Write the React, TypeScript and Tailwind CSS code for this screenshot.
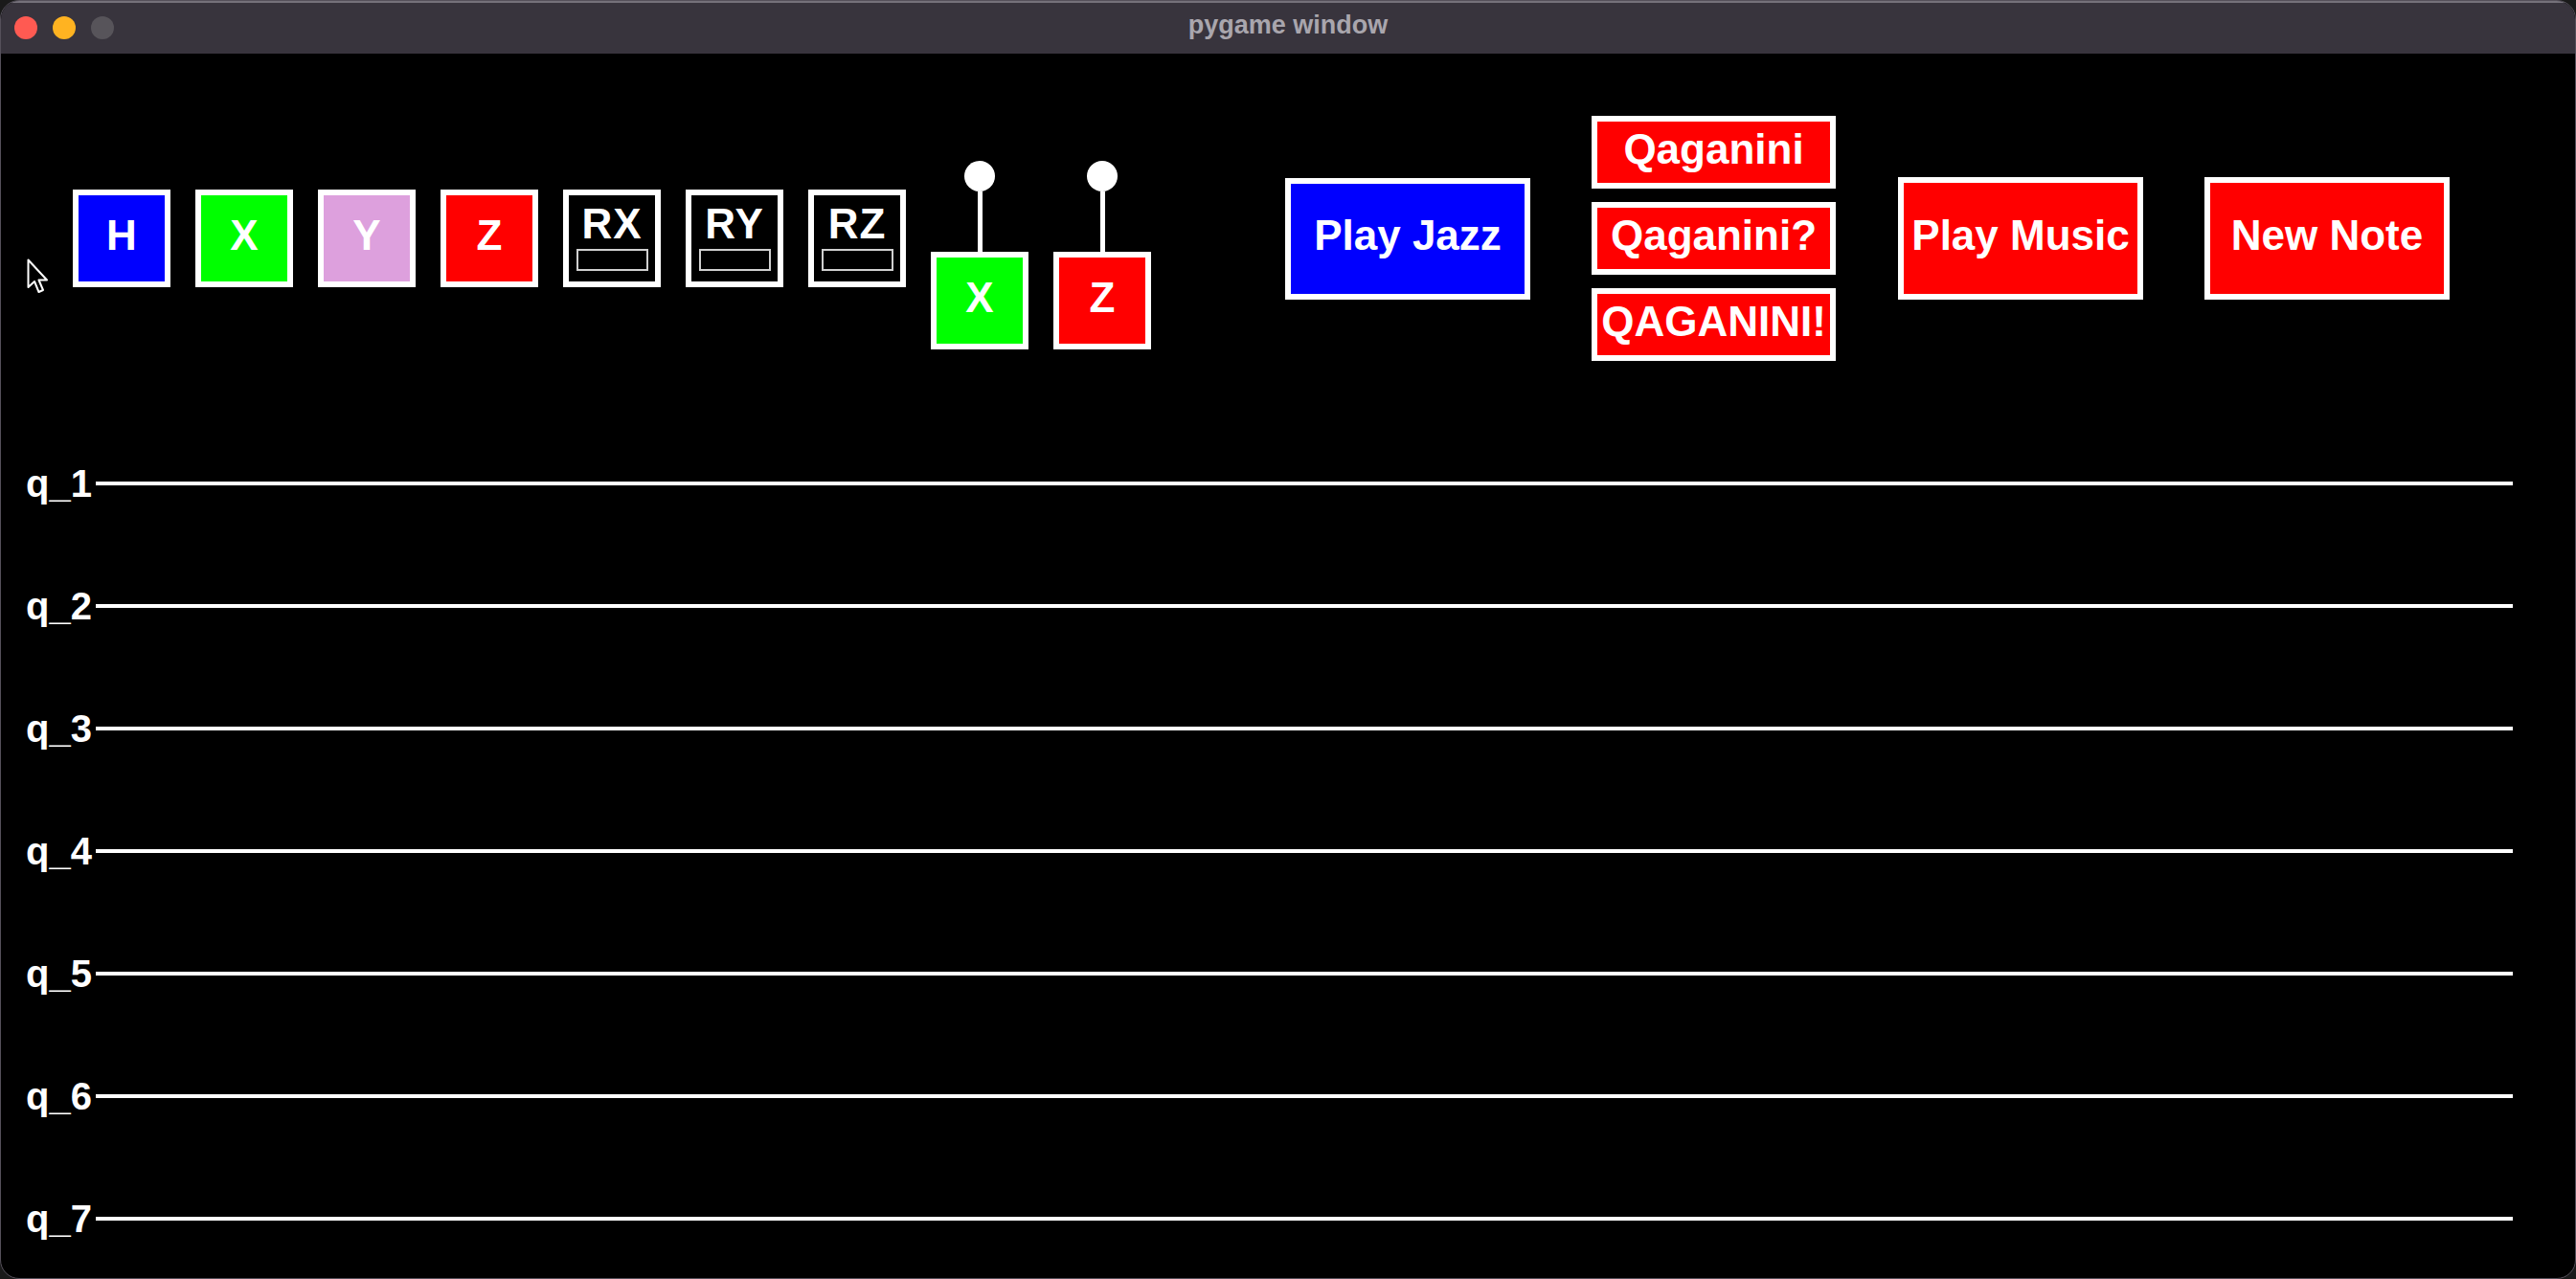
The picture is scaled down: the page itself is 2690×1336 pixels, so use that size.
import React from "react";

type Gate = {
  label: string;
  bg: string;
  angle?: boolean;
};

const gates: Gate[] = [
  { label: "H", bg: "bg-[#0000ff]" },
  { label: "X", bg: "bg-[#00ff00]" },
  { label: "Y", bg: "bg-[#dda0dd]" },
  { label: "Z", bg: "bg-[#ff0000]" },
  { label: "RX", bg: "bg-black", angle: true },
  { label: "RY", bg: "bg-black", angle: true },
  { label: "RZ", bg: "bg-black", angle: true },
];

const controlled: Gate[] = [
  { label: "X", bg: "bg-[#00ff00]" },
  { label: "Z", bg: "bg-[#ff0000]" },
];

const qubits = ["q_1", "q_2", "q_3", "q_4", "q_5", "q_6", "q_7"];

function GateBox({ gate }: { gate: Gate }) {
  if (gate.angle) {
    return (
      <div
        className={`w-[102px] h-[102px] border-[6px] border-white ${gate.bg} flex flex-col items-center pt-[8px]`}
      >
        <span className="text-[44px] leading-none font-bold text-white tracking-[1px]">
          {gate.label}
        </span>
        <div className="mt-[4px] w-[75px] h-[23px] border-2 border-[#d0d0d0]" />
      </div>
    );
  }
  return (
    <div
      className={`w-[102px] h-[102px] border-[6px] border-white ${gate.bg} flex items-center justify-center pb-[6px]`}
    >
      <span className="text-[44px] leading-none font-bold text-white">
        {gate.label}
      </span>
    </div>
  );
}

function ControlledGate({ gate }: { gate: Gate }) {
  return (
    <div className="flex flex-col items-center">
      <div className="w-[32px] h-[32px] rounded-full bg-white" />
      <div className="w-[5px] h-[63px] bg-white" />
      <GateBox gate={gate} />
    </div>
  );
}

function Button({
  label,
  bg,
  size,
}: {
  label: string;
  bg: string;
  size: string;
}) {
  return (
    <div
      className={`${size} ${bg} border-[6px] border-white flex items-center justify-center pb-[6px]`}
    >
      <span className="text-[44px] leading-none font-bold text-white whitespace-nowrap">
        {label}
      </span>
    </div>
  );
}

function Cursor() {
  return (
    <svg
      className="absolute left-[27px] top-[269px]"
      width="24"
      height="38"
      viewBox="0 0 24 38"
    >
      <path
        d="M1.5 1.5 L1.5 30 L8 24 L12.5 35 L17 33 L12.5 22.5 L21 22.5 Z"
        fill="black"
        stroke="white"
        strokeWidth="2"
        strokeLinejoin="round"
      />
    </svg>
  );
}

export default function App() {
  return (
    <div
      className="w-[2690px] h-[1336px] bg-[#1a1a1a] overflow-hidden"
      style={{ fontFamily: '"Liberation Sans", Arial, sans-serif' }}
    >
      <div className="relative w-full h-full rounded-[20px] overflow-hidden border border-[#55505a] bg-black flex flex-col">
        {/* Title bar */}
        <div className="relative h-[55px] shrink-0 bg-[#38343d] border-t-2 border-[#75717a] flex items-center justify-center">
          <div className="absolute left-[14px] top-[14px] flex items-center gap-[16px]">
            <div className="w-[24px] h-[24px] rounded-full bg-[#ff5a52]" />
            <div className="w-[24px] h-[24px] rounded-full bg-[#ffb321]" />
            <div className="w-[24px] h-[24px] rounded-full bg-[#57545a]" />
          </div>
          <span className="text-[27px] font-bold text-[#a9a6ad] leading-none -mt-[6px]">
            pygame window
          </span>
        </div>

        {/* Toolbar */}
        <div className="flex items-center pl-[75px] pt-[65px] h-[321px]">
          <div className="flex items-center gap-[26px]">
            {gates.map((g) => (
              <GateBox key={g.label} gate={g} />
            ))}
            {controlled.map((g) => (
              <div key={"c" + g.label} className="mt-[34px]">
                <ControlledGate gate={g} />
              </div>
            ))}
          </div>

          <div className="ml-[140px]">
            <Button label="Play Jazz" bg="bg-[#0000ff]" size="w-[256px] h-[127px]" />
          </div>

          <div className="ml-[64px] flex flex-col gap-[14px]">
            <Button label="Qaganini" bg="bg-[#ff0000]" size="w-[255px] h-[76px]" />
            <Button label="Qaganini?" bg="bg-[#ff0000]" size="w-[255px] h-[76px]" />
            <Button label="QAGANINI!" bg="bg-[#ff0000]" size="w-[255px] h-[76px]" />
          </div>

          <div className="ml-[65px]">
            <Button label="Play Music" bg="bg-[#ff0000]" size="w-[256px] h-[128px]" />
          </div>

          <div className="ml-[64px]">
            <Button label="New Note" bg="bg-[#ff0000]" size="w-[256px] h-[128px]" />
          </div>
        </div>

        {/* Qubit wires */}
        <div className="flex flex-col gap-[80px] mt-[104px]">
          {qubits.map((q) => (
            <div key={q} className="flex items-center h-[48px]">
              <span className="w-[99px] pl-[26px] text-[40px] leading-none font-bold text-white">
                {q}
              </span>
              <div className="w-[2524px] h-[4px] bg-white" />
            </div>
          ))}
        </div>

        <Cursor />
      </div>
    </div>
  );
}
